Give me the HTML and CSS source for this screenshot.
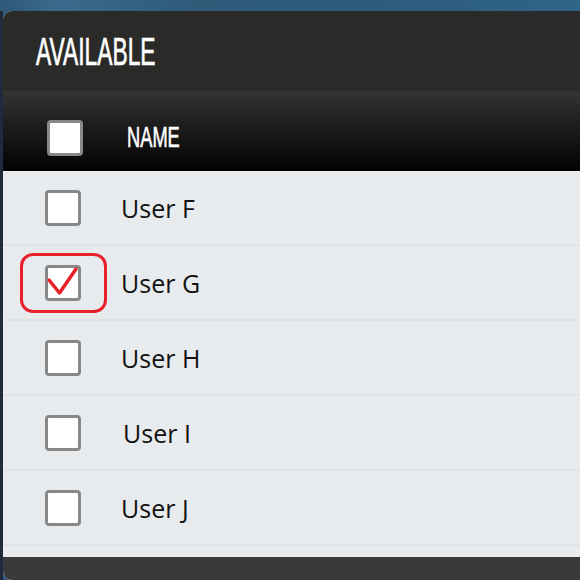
FILE: index.html
```html
<!DOCTYPE html>
<html>
<head>
<meta charset="utf-8">
<link rel="stylesheet" href="styles.css">
</head>
<body>
<div class="bg">
  <div class="panel">
    <div class="titlebar"><span class="title">AVAILABLE</span></div>
    <div class="thead">
      <span class="cb cb-head"></span>
      <span class="th">NAME</span>
    </div>
    <div class="list">
      <div class="row"><span class="cbwrap"><span class="cb"></span></span><span class="name">User F</span></div>
      <div class="row"><span class="cbwrap highlight"><span class="cb">
        <svg class="check" width="36" height="36" viewBox="0 0 36 36"><path d="M4 15 L14.5 28 L31 4" fill="none" stroke="#e8202a" stroke-width="3.5" stroke-linecap="round" stroke-linejoin="round"/></svg>
      </span></span><span class="name">User G</span></div>
      <div class="row"><span class="cbwrap"><span class="cb"></span></span><span class="name">User H</span></div>
      <div class="row"><span class="cbwrap"><span class="cb"></span></span><span class="name n-i">User I</span></div>
      <div class="row"><span class="cbwrap"><span class="cb"></span></span><span class="name">User J</span></div>
    </div>
    <div class="footer"></div>
  </div>
</div>
</body>
</html>
```

FILE: styles.css
```css
html, body {
  margin: 0;
  padding: 0;
  width: 580px;
  height: 580px;
  overflow: hidden;
}
.bg {
  width: 580px;
  height: 580px;
  background: linear-gradient(90deg, #2f5778 0%, #3a6a8c 10%, #2f5a78 35%, #2d5c7e 70%, #2f6589 100%);
  padding: 11px 0 0 3px;
  box-sizing: border-box;
  position: relative;
}
.bg::before {
  content: "";
  position: absolute;
  left: 0;
  top: 11px;
  width: 3px;
  bottom: 0;
  background: #1f2b3d;
}
.panel {
  width: 577px;
  height: 569px;
  border-radius: 9px 0 0 9px;
  overflow: hidden;
  display: flex;
  flex-direction: column;
  background: #e8ebee;
}
.titlebar {
  height: 80px;
  background: #2a2b29;
  display: flex;
  align-items: center;
  padding-left: 33px;
}
.title {
  font-family: "Liberation Sans", Arial, sans-serif;
  font-size: 38px;
  color: #fff;
  -webkit-text-stroke: 0.7px #fff;
  display: inline-block;
  transform: scaleX(0.6);
  transform-origin: left center;
  line-height: 1;
  margin-top: 1px;
}
.thead {
  height: 80px;
  box-sizing: border-box;
  padding-top: 14px;
  background: linear-gradient(180deg, #343434 0%, #1c1c1c 45%, #020202 100%);
  display: flex;
  align-items: center;
  padding-left: 44px;
}
.th {
  font-family: "Liberation Sans", Arial, sans-serif;
  font-size: 29px;
  color: #fff;
  -webkit-text-stroke: 0.6px #fff;
  display: inline-block;
  transform: scaleX(0.63);
  transform-origin: left center;
  line-height: 1;
  margin-left: 44px;
  margin-top: -1px;
}
.cb {
  display: inline-block;
  width: 36px;
  height: 36px;
  box-sizing: border-box;
  border: 3px solid #888;
  border-radius: 4px;
  background: #fff;
  position: relative;
}
.list {
  flex: 0 0 auto;
  padding-bottom: 11px;
  background: #e8ebee;
}
.row {
  height: 73px;
  border-bottom: 2px solid #e1e2e3;
  display: flex;
  align-items: center;
  padding-left: 17px;
}
.cbwrap {
  width: 87px;
  height: 60px;
  box-sizing: border-box;
  display: flex;
  align-items: center;
  justify-content: center;
  border: 3px solid transparent;
  border-radius: 13px;
}
.cbwrap .cb {
  margin-left: -1px;
}
.highlight {
  border-color: #e8202a;
}
.check {
  position: absolute;
  left: -3px;
  top: -3px;
}
.name {
  font-family: "Open Sans", "Noto Sans", sans-serif;
  font-size: 25px;
  color: #111;
  margin-left: 14px;
  margin-top: 1px;
}
.n-i {
  margin-left: 16px;
}
.footer {
  flex: 1;
  background: #3a3a3a;
}
```
